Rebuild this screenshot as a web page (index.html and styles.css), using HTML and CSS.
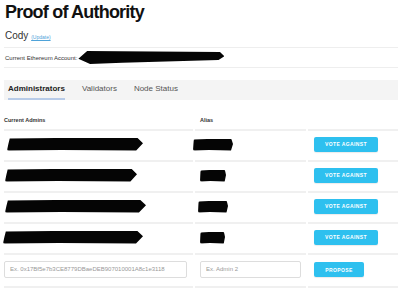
FILE: index.html
```html
<!DOCTYPE html>
<html lang="en">
<head>
  <meta charset="UTF-8">
  <title>Proof of Authority</title>
  <link rel="stylesheet" href="styles.css">
</head>
<body>
  <div class="container">
    <h1>Proof of Authority</h1>

    <div class="user">Cody <a href="#" class="update-link">(Update)</a></div>

    <div class="account">
      Current Ethereum Account: <span class="redact account-redact"></span>
    </div>

    <ul class="tabs">
      <li class="tab active">Administrators</li>
      <li class="tab">Validators</li>
      <li class="tab">Node Status</li>
    </ul>

    <table class="admins">
      <thead>
        <tr>
          <th class="col-addr">Current Admins</th>
          <th class="col-alias">Alias</th>
          <th class="col-action"></th>
        </tr>
      </thead>
      <tbody>
        <tr>
          <td class="col-addr"><span class="redact addr" style="width: 136px; margin-left: 3px;"></span></td>
          <td class="col-alias"><span class="redact alias" style="width: 40px; margin-left: -7px;"></span></td>
          <td class="col-action"><button class="btn">VOTE AGAINST</button></td>
        </tr>
        <tr>
          <td class="col-addr"><span class="redact addr" style="width: 132px; margin-left: 1px;"></span></td>
          <td class="col-alias"><span class="redact alias" style="width: 26px;"></span></td>
          <td class="col-action"><button class="btn">VOTE AGAINST</button></td>
        </tr>
        <tr>
          <td class="col-addr"><span class="redact addr" style="width: 141px; margin-left: 1px;"></span></td>
          <td class="col-alias"><span class="redact alias" style="width: 30px; margin-left: -2px;"></span></td>
          <td class="col-action"><button class="btn">VOTE AGAINST</button></td>
        </tr>
        <tr>
          <td class="col-addr"><span class="redact addr" style="width: 140px; margin-left: -1px;"></span></td>
          <td class="col-alias"><span class="redact alias" style="width: 25px;"></span></td>
          <td class="col-action"><button class="btn">VOTE AGAINST</button></td>
        </tr>
        <tr class="propose-row">
          <td class="col-addr"><input type="text" class="field field-addr" placeholder="Ex. 0x17Bf5e7b3CE8779DBaeDEB907010001A8c1e3118"></td>
          <td class="col-alias"><input type="text" class="field field-alias" placeholder="Ex. Admin 2"></td>
          <td class="col-action"><button class="btn btn-propose">PROPOSE</button></td>
        </tr>
      </tbody>
    </table>
  </div>
</body>
</html>
```

FILE: styles.css
```css
body {
  margin: 0;
  font-family: "Liberation Sans", Arial, sans-serif;
  color: #222;
  background-color: white;
}
.container {
  padding: 0 2px 0 4px;
}
h1 {
  margin: 0;
  padding: 1px 0 0 1px;
  font-size: 18px;
  line-height: 22px;
  font-weight: bold;
  letter-spacing: -0.8px;
  color: #111;
}
.user {
  margin-top: 6px;
  font-size: 10px;
  line-height: 14px;
  color: #333;
  padding: 0 0 3px 1px;
  border-bottom: 1px solid #eee;
}
.update-link {
  font-size: 5px;
  color: #4fa3d9;
}
.account {
  display: flex;
  align-items: center;
  height: 19px;
  padding-left: 1px;
  font-size: 6px;
  color: #333;
  border-bottom: 1px solid #eee;
}
.redact {
  display: inline-block;
  background-color: #050505;
  height: 12px;
  border-radius: 2px;
  clip-path: polygon(2% 8%, 70% 0, 96% 4%, 100% 45%, 95% 100%, 40% 96%, 0 100%, 1% 50%);
}
.account-redact {
  width: 146px;
  height: 13px;
  margin-left: 1px;
  clip-path: polygon(6% 0, 97% 8%, 100% 40%, 96% 70%, 30% 90%, 8% 100%, 0 60%);
}
.tabs {
  list-style: none;
  margin: 12px 0 0;
  padding: 0 0 0 4px;
  display: flex;
  background-color: #f4f4f4;
  height: 20px;
}
.tab {
  font-size: 8px;
  line-height: 18px;
  color: #555;
  margin-right: 17px;
  border-bottom: 2px solid transparent;
}
.tab.active {
  color: #222;
  font-weight: bold;
  border-bottom-color: #b7cbe8;
}
.admins {
  width: calc(100% + 4px);
  margin: 11px -2px 0;
  border-collapse: separate;
  border-spacing: 2px 0;
}
.admins th {
  text-align: left;
  font-size: 5.5px;
  font-weight: bold;
  color: #333;
  height: 18px;
  border-bottom: 2px solid #f0f0f0;
  padding: 0;
}
.admins td {
  height: 29px;
  padding: 0;
  border-bottom: 2px solid #f0f0f0;
  vertical-align: middle;
}
.col-addr {
  width: 189px;
}
.col-alias {
  width: 106px;
  padding-left: 5px !important;
}
.col-action {
  padding-left: 6px !important;
}
.addr {
  height: 13px;
}
.alias {
  height: 12px;
}
.btn {
  display: block;
  width: 64px;
  height: 15px;
  margin-top: -3px;
  border: none;
  border-radius: 2px;
  background-color: #2ec0ef;
  color: white;
  font-family: "Liberation Sans", Arial, sans-serif;
  font-size: 5px;
  font-weight: bold;
  letter-spacing: 0.4px;
  box-shadow: 0 1px 1px rgba(0, 0, 0, 0.08);
  cursor: pointer;
}
.btn-propose {
  width: 50px;
  margin-top: -2px;
}
.propose-row td {
  height: 31px;
}
.field {
  display: block;
  box-sizing: border-box;
  height: 17px;
  margin-top: -3px;
  border: 1px solid #ddd;
  border-radius: 2px;
  padding: 0 5px;
  font-family: "Liberation Sans", Arial, sans-serif;
  font-size: 6px;
  color: #555;
}
.field::placeholder {
  color: #999;
}
.field-addr {
  width: 183px;
}
.field-alias {
  width: 101px;
}
```
